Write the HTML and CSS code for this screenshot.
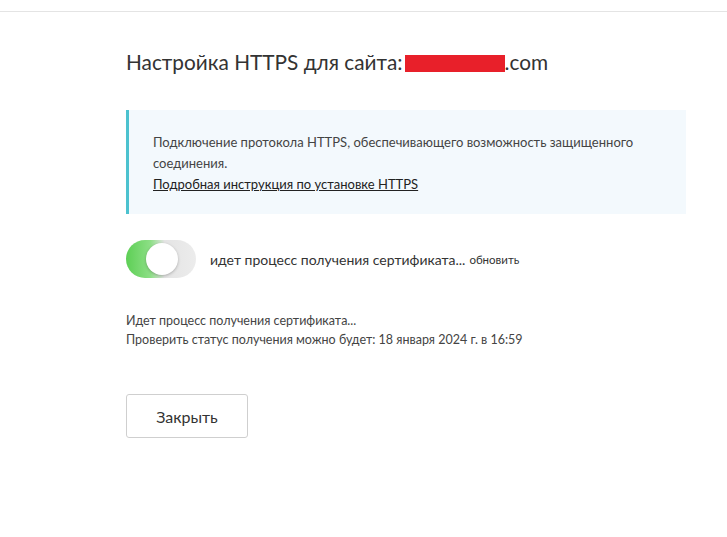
FILE: index.html
```html
<!DOCTYPE html>
<html lang="ru">
<head>
    <meta charset="UTF-8">
    <title>Настройка HTTPS</title>
    <link rel="stylesheet" href="styles.css">
</head>
<body>
    <div class="topbar"></div>
    <div class="container">
        <h1 class="title">Настройка HTTPS для сайта:<span class="hidden-domain"></span>.com</h1>

        <div class="info-box">
            <p>Подключение протокола HTTPS, обеспечивающего возможность защищенного соединения.</p>
            <a href="#">Подробная инструкция по установке HTTPS</a>
        </div>

        <div class="switch-row">
            <span class="switch"><span class="knob"></span></span>
            <span class="switch-label">идет процесс получения сертификата...</span>
            <a class="refresh" href="#">обновить</a>
        </div>

        <div class="status">
            <div>Идет процесс получения сертификата...</div>
            <div>Проверить статус получения можно будет: 18 января 2024 г. в 16:59</div>
        </div>

        <button class="btn-close">Закрыть</button>
    </div>
</body>
</html>
```

FILE: styles.css
```css
body {
    margin: 0;
    font-family: 'Lato', 'Noto Sans', sans-serif;
    color: #3a3a3a;
    background: #fff;
}
.topbar {
    height: 11px;
    border-bottom: 1px solid #e4e4e4;
}
.container {
    padding: 0 41px 0 126px;
}
.title {
    margin: 37px 0 0;
    font-size: 20.8px;
    font-weight: normal;
    color: #333;
    line-height: 25px;
}
.hidden-domain {
    display: inline-block;
    width: 100px;
    height: 17px;
    background: #e8202a;
    vertical-align: -2px;
    margin-left: 2px;
}
.info-box {
    margin-top: 36px;
    background: #f3f9fd;
    border-left: 3px solid #4cc2cf;
    padding: 22px 24px 19px 24px;
    font-size: 13px;
    line-height: 21px;
    color: #444;
}
.info-box p {
    margin: 0;
    max-width: 500px;
}
.info-box a {
    color: #222;
    text-decoration: underline;
}
.switch-row {
    display: flex;
    align-items: center;
    margin-top: 26px;
}
.switch {
    position: relative;
    width: 70px;
    height: 38px;
    border-radius: 19px;
    background: linear-gradient(90deg, #5dcf55 0%, #8ddf86 35%, #e4e4e4 55%, #ececec 100%);
    flex-shrink: 0;
}
.knob {
    position: absolute;
    left: 20px;
    top: 3px;
    width: 32px;
    height: 32px;
    border-radius: 50%;
    background: #fff;
    box-shadow: 0 1px 3px rgba(0,0,0,0.25);
}
.switch-label {
    margin-left: 14px;
    font-size: 14px;
    color: #333;
}
.refresh {
    margin-left: 4px;
    font-size: 11.5px;
    color: #333;
    text-decoration: none;
}
.status {
    margin-top: 33px;
    font-size: 12.5px;
    line-height: 19px;
    color: #444;
}
.btn-close {
    margin-top: 45px;
    width: 122px;
    height: 44px;
    background: #fff;
    border: 1px solid #cfcfcf;
    border-radius: 3px;
    font-family: inherit;
    font-size: 16px;
    color: #333;
}
```
